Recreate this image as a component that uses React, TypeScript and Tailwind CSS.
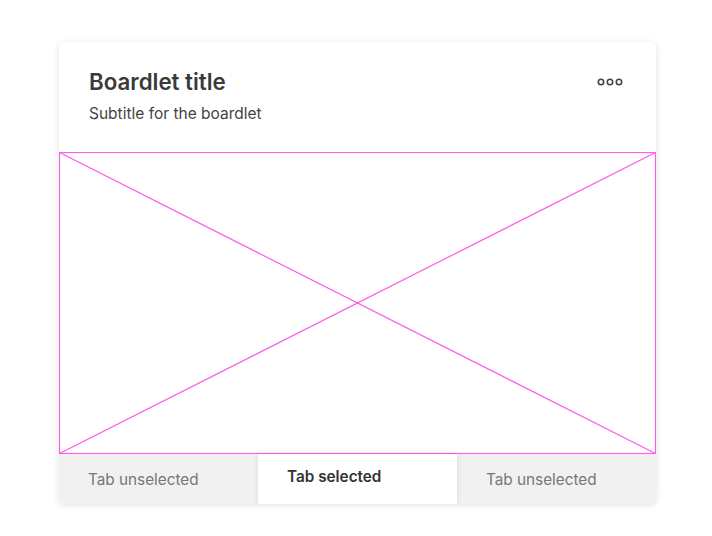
import React from "react";

export default function App() {
  return (
    <div className="w-[712px] h-[536px] bg-white pt-[42px] pl-[59px]" style={{ fontFamily: "Inter, 'Noto Sans', sans-serif" }}>
      <div className="w-[597px] h-[462px] bg-white rounded-[5px] shadow-[0_1px_6px_rgba(0,0,0,0.12)] overflow-hidden flex flex-col">
        <div className="h-[110px] flex justify-between pl-[30px] pr-[33px] pt-[27px]">
          <div className="flex flex-col">
            <div className="text-[22.3px] leading-[26px] font-semibold text-[#3a3a3a]">Boardlet title</div>
            <div className="mt-[9px] text-[15.5px] leading-[20px] text-[#444]">Subtitle for the boardlet</div>
          </div>
          <div className="pt-[9px]">
            <svg width="26" height="8" viewBox="0 0 26 8">
              <circle cx="4" cy="4" r="2.7" fill="none" stroke="#444" strokeWidth="1.6" />
              <circle cx="13" cy="4" r="2.7" fill="none" stroke="#444" strokeWidth="1.6" />
              <circle cx="22" cy="4" r="2.7" fill="none" stroke="#444" strokeWidth="1.6" />
            </svg>
          </div>
        </div>
        <div className="h-[302px] relative">
          <svg className="absolute inset-0" width="597" height="302" viewBox="0 0 597 302">
            <rect x="0.5" y="0.5" width="596" height="301" fill="none" stroke="#ff5ce8" strokeWidth="1.2" />
            <line x1="0.5" y1="0.5" x2="596.5" y2="301.5" stroke="#ff5ce8" strokeWidth="1.2" />
            <line x1="596.5" y1="0.5" x2="0.5" y2="301.5" stroke="#ff5ce8" strokeWidth="1.2" />
          </svg>
        </div>
        <div className="h-[50px] flex bg-[#f1f1f1]">
          <div className="w-[199px] pl-[29px] pt-[16px] text-[15.3px] leading-[20px] text-[#777]">Tab unselected</div>
          <div className="w-[199px] relative z-10 bg-white shadow-[0_0_6px_rgba(0,0,0,0.1)] pl-[29px] pt-[13px] text-[15.3px] leading-[20px] font-semibold text-[#333]">Tab selected</div>
          <div className="w-[199px] pl-[29px] pt-[16px] text-[15.3px] leading-[20px] text-[#777]">Tab unselected</div>
        </div>
      </div>
    </div>
  );
}
